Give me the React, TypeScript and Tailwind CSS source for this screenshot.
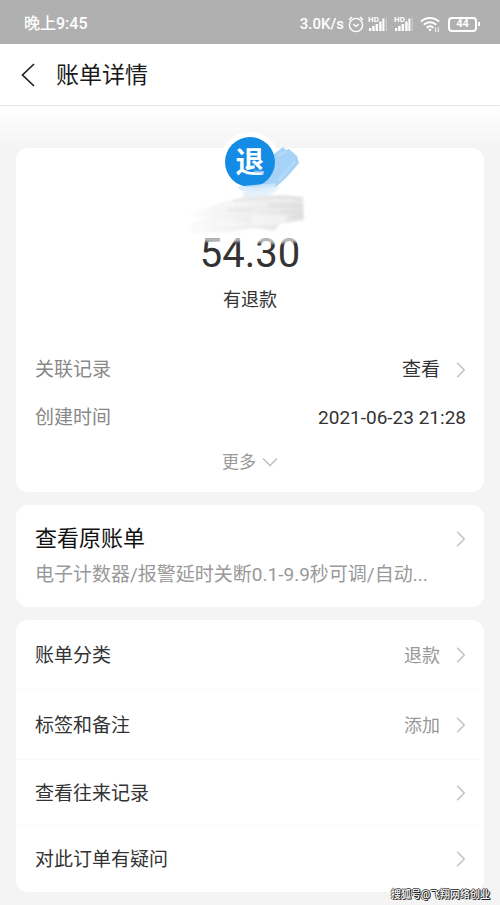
import type { ReactNode } from "react";

function Chevron({ className = "" }: { className?: string }) {
  return (
    <svg className={`shrink-0 ${className}`} width="10" height="18" viewBox="0 0 10 18" fill="none" stroke="#c4c4c4" strokeWidth="1.6" aria-hidden="true">
      <path d="M1.2 1.8 8.2 9 1.2 16.2" />
    </svg>
  );
}

function Signal() {
  return (
    <svg width="20" height="16" viewBox="0 0 20 16" aria-hidden="true">
      <text x="0" y="6" fontSize="8" fontWeight="700" fill="#fff" fontFamily="Roboto, sans-serif">HD</text>
      <g fill="#fff">
        <rect x="1" y="12" width="2.2" height="3" />
        <rect x="4.2" y="10" width="2.4" height="5" />
        <rect x="7.6" y="8" width="2.4" height="7" />
        <rect x="11.2" y="5.5" width="2.4" height="9.5" />
        <rect x="14.4" y="2.5" width="2" height="12.5" />
        <rect x="17.6" y="1.5" width="1.4" height="13.5" opacity=".3" />
      </g>
    </svg>
  );
}

function StatusBar() {
  return (
    <div className="flex h-11 items-center justify-between bg-[#b0b0b0] pr-5 pl-6 pt-1 text-white">
      <span className="text-base leading-5 font-medium">晚上9:45</span>
      <div className="flex items-center">
        <span className="mr-1 text-[15px] leading-5 font-medium">3.0K/s</span>
        <svg className="mr-1" width="16" height="17" viewBox="0 0 16 17" fill="none" stroke="#fff" strokeWidth="1.4" aria-hidden="true">
          <circle cx="8" cy="9" r="6.6" />
          <path d="M.8 4 4 1M15.2 4 12 1M5.2 8 8 10.5 10.8 8" />
        </svg>
        <div className="flex gap-1.5">
          <Signal />
          <Signal />
        </div>
        <svg className="mr-1.5 ml-1.5" width="22" height="17" viewBox="0 0 22 17" fill="none" stroke="#fff" strokeWidth="2" aria-hidden="true">
          <path d="M1 5.6c5-4.8 13-4.8 18 0M3.8 8.8c3.6-3.3 8.8-3.3 12.4 0M6.6 11.8c2-1.8 4.8-1.8 6.8 0" />
          <path d="M8.2 13.3 10 15.5l1.8-2.2c-1-.9-2.6-.9-3.6 0Z" fill="#fff" stroke="none" />
          <path d="M15.5 11.5v4.5M18.3 11.5v4.5" strokeWidth="1.2" opacity=".8" />
        </svg>
        <div className="flex h-[15px] w-[29px] items-center justify-center rounded border-2 border-white text-[11px] leading-3 font-bold">44</div>
        <div className="ml-px h-1 w-0.5 bg-white" />
      </div>
    </div>
  );
}

function BrushStrokes() {
  return (
    <svg className="pointer-events-none absolute top-0 left-1/2 -translate-x-1/2" width="130" height="110" viewBox="0 0 130 110" aria-hidden="true">
      <defs>
        <linearGradient id="smear" x1="0" x2="1">
          <stop offset="0" stopColor="#f2f2f2" stopOpacity=".2" />
          <stop offset=".5" stopColor="#f0f0f0" />
          <stop offset="1" stopColor="#e4e4e4" />
        </linearGradient>
        <filter id="soften" x="-10%" y="-20%" width="120%" height="140%">
          <feGaussianBlur stdDeviation="1" />
        </filter>
      </defs>
      <g filter="url(#soften)">
        <path d="M60 44 95 42 90 48 80 53 57 54Z" fill="#dceefb" opacity=".8" />
        <path d="M0 71 38 58 60 53 95 51 118 53 119 76 95 80 90 87 68 84 45 88 8 90 5 80 22 74Z" fill="url(#smear)" />
        <path d="M40 60h42M68 72h32v8H68zM30 80h34M88 56h20" stroke="#fff" strokeWidth="2" fill="#fff" opacity=".4" />
        <path d="M48 57c20-3 40-4 68-3M42 66h26" stroke="#dedede" strokeWidth="2" fill="none" opacity=".6" />
        <path d="M84 62h34M96 68h22M106 74l12-3" stroke="#d0d0d0" strokeWidth="3" opacity=".3" />
        <path d="M14 93h104v4l-14 2-22 1-22-3-22 2-24-2Z" fill="#fff" opacity=".65" />
      </g>
    </svg>
  );
}

function RefundBadge() {
  return (
    <div className="relative mx-auto -mt-4 flex h-[60px] w-[60px] items-center justify-center rounded-full bg-white">
      <svg className="absolute top-0 left-4 overflow-visible" width="60" height="65" viewBox="0 0 60 65" aria-hidden="true">
        <path d="m38 22 9-7 3 3 3-1 8 7 2 7-12 14-11 10-23 2 3-12Z" fill="#a5d2f6" />
        <path d="m42 24 9-5M42 49l17-20" stroke="#bcdef8" strokeWidth="3" opacity=".6" />
      </svg>
      <div className="relative flex h-[50px] w-[50px] items-center justify-center rounded-full bg-[#148ce6] pt-0.5 text-[29px] leading-8 font-bold text-white">退</div>
      <svg className="absolute bottom-0 left-3 overflow-visible" width="48" height="14" viewBox="0 0 48 14" aria-hidden="true">
        <path d="M5 9c10-2 20-2 40-4l-4 5-14 3H10Z" fill="#cfe7fa" opacity=".8" />
        <path d="m22-8 9 1v3l-9-1Z" fill="#8fc8f4" opacity=".6" />
      </svg>
    </div>
  );
}

function Row({ label, value, className }: { label: string; value?: ReactNode; className: string }) {
  return (
    <button type="button" className={`flex w-full items-center pr-[18px] pl-[19px] text-left ${className}`}>
      <span className="flex-1 pt-0.5 text-[19px] leading-6 text-[#333333]">{label}</span>
      {value && <span className="pt-0.5 text-lg leading-6 text-[#999999]">{value}</span>}
      <Chevron className="ml-4" />
    </button>
  );
}

export default function App() {
  return (
    <div className="min-h-screen bg-[#f4f4f4] font-[Roboto,'Noto_Sans_CJK_SC',sans-serif]">
      <StatusBar />
      <header className="flex h-[62px] items-center border-b border-[#e8e8e8] bg-white pl-5">
        <button type="button" aria-label="返回" className="mr-5 flex h-6 w-4">
          <svg width="16" height="24" viewBox="0 0 16 24" fill="none" stroke="#222" strokeWidth="1.7" aria-hidden="true">
            <path d="M14 1 2.5 12 14 23" />
          </svg>
        </button>
        <h1 className="pt-0.5 text-[23px] leading-8 text-[#1a1a1a]">账单详情</h1>
      </header>

      <main className="relative bg-linear-to-b from-white to-[#f4f4f4] to-[42px] px-4 pt-[42px] pb-3">
        <section className="flow-root rounded-xl bg-white pb-4">
          <RefundBadge />
          <div className="relative pt-10">
            <p className="text-center text-[40px] leading-[44px] text-[#333333]">54.30</p>
            <div className="absolute inset-x-0 -top-12 h-[110px]">
              <BrushStrokes />
            </div>
          </div>
          <p className="mt-3 text-center text-lg leading-6 text-[#333333]">有退款</p>
          <dl className="mt-[34px] pr-[18px] pl-[19px] text-[19px] leading-6">
            <div className="flex h-12 items-center justify-between">
              <dt className="text-[#888888]">关联记录</dt>
              <dd>
                <button type="button" className="flex items-center text-[#333333]">
                  查看
                  <Chevron className="ml-4" />
                </button>
              </dd>
            </div>
            <div className="flex h-12 items-center justify-between">
              <dt className="text-[#888888]">创建时间</dt>
              <dd className="text-[#333333]">2021-06-23 21:28</dd>
            </div>
          </dl>
          <button type="button" className="mx-auto mt-1.5 flex h-7 items-center gap-1.5 text-[17px] leading-6 text-[#999999]">
            更多
            <svg width="16" height="10" viewBox="0 0 16 10" fill="none" stroke="#c4c4c4" strokeWidth="1.6" aria-hidden="true">
              <path d="M1 1.5 8 8.5 15 1.5" />
            </svg>
          </button>
        </section>

        <button type="button" className="mt-[13px] block w-full rounded-xl bg-white pt-[18px] pr-[18px] pb-[18px] pl-[19px] text-left">
          <span className="flex items-center justify-between">
            <span className="text-[22px] leading-8 text-[#111111]">查看原账单</span>
            <Chevron />
          </span>
          <span className="mt-1.5 block text-[19px] leading-7 text-[#999999]">电子计数器/报警延时关断0.1-9.9秒可调/自动...</span>
        </button>

        <section className="mt-[13px] divide-y divide-[#fafafa] rounded-xl bg-white">
          <Row label="账单分类" value="退款" className="h-[70px]" />
          <Row label="标签和备注" value="添加" className="h-[70px]" />
          <Row label="查看往来记录" className="h-[66px]" />
          <Row label="对此订单有疑问" className="h-[66px]" />
        </section>

        <p className="absolute right-2.5 bottom-0.5 text-[10px] leading-3.5 font-medium text-white [text-shadow:1px_1px_0_#222,-1px_0_0_#444,0_-1px_0_#444,1px_0_0_#222]">搜狐号@飞翔网络创业</p>
      </main>
    </div>
  );
}
